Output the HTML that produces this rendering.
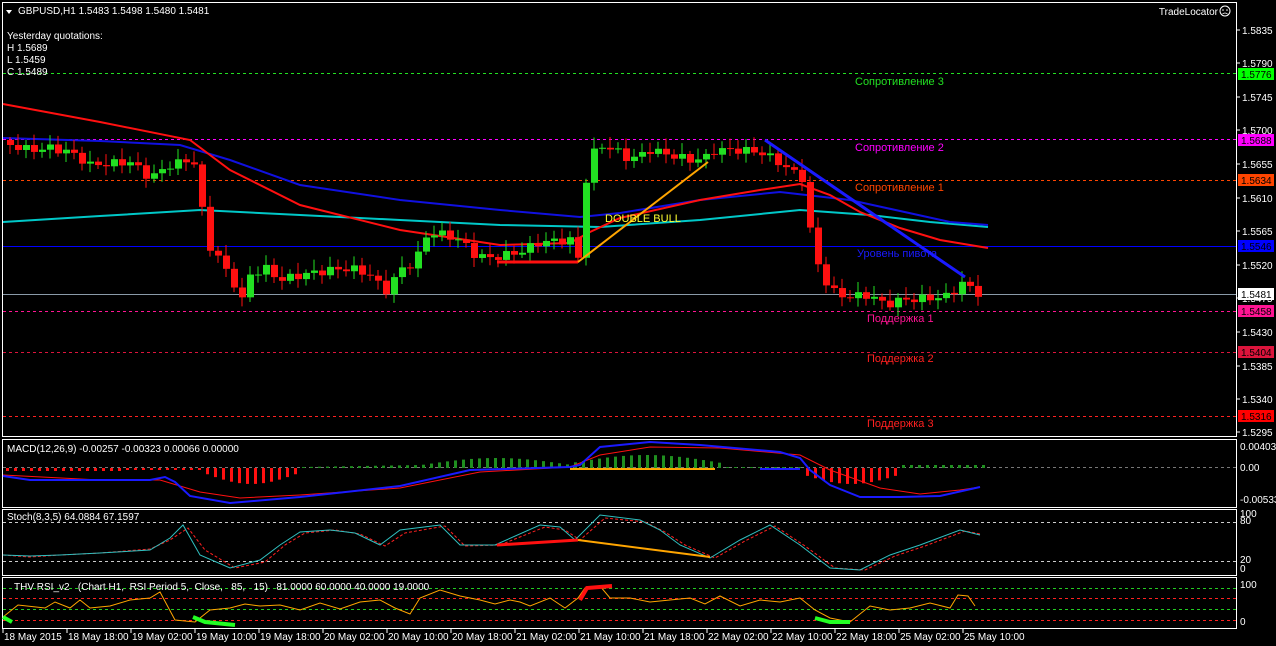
<!DOCTYPE html>
<html><head><meta charset="utf-8"><style>
html,body{margin:0;padding:0;background:#000;width:1276px;height:646px;overflow:hidden}
svg{display:block;font-family:"Liberation Sans","DejaVu Sans",sans-serif}
</style></head><body>
<svg id="s" width="1276" height="646" viewBox="0 0 1276 646" xmlns="http://www.w3.org/2000/svg">
<rect width="1276" height="646" fill="#000"/>
<g fill="none" stroke="#fff" stroke-width="1">
<rect x="2.5" y="2.5" width="1234" height="434"/>
<rect x="2.5" y="439.5" width="1234" height="68"/>
<rect x="2.5" y="509.5" width="1234" height="66"/>
<rect x="2.5" y="577.5" width="1234" height="51"/>
</g>
<g stroke-width="1" fill="none">
<line x1="3" y1="73.5" x2="1236" y2="73.5" stroke="#22e022" stroke-dasharray="3,3"/>
<line x1="3" y1="139.5" x2="1236" y2="139.5" stroke="#ff00ff" stroke-dasharray="3,3"/>
<line x1="3" y1="180.5" x2="1236" y2="180.5" stroke="#ff4500" stroke-dasharray="3,3"/>
<line x1="3" y1="246.5" x2="1236" y2="246.5" stroke="#0000ff"/>
<line x1="3" y1="294.5" x2="1236" y2="294.5" stroke="#8a9aa8"/>
<line x1="3" y1="311.5" x2="1236" y2="311.5" stroke="#ff1493" stroke-dasharray="3,3"/>
<line x1="3" y1="352.5" x2="1236" y2="352.5" stroke="#dc143c" stroke-dasharray="3,3"/>
<line x1="3" y1="416.5" x2="1236" y2="416.5" stroke="#ff2020" stroke-dasharray="3,3"/>
</g>
<g fill="none" stroke-width="2">
<polyline stroke="#00c8c8" points="3,222 100,216 200,210 300,215 400,220 500,225 600,227 700,220 780,212 800,210 870,215 930,222 988,227"/>
<polyline stroke="#1010e0" points="3,138 100,141 180,145 230,160 300,185 400,200 500,210 580,217 620,213 700,200 780,192 850,200 950,222 988,225"/>
<polyline stroke="#ff1010" points="3,104 100,122 190,140 230,170 300,205 400,230 500,245 570,243 590,232 620,218 700,200 760,190 800,184 830,195 860,212 900,228 940,240 988,248"/>
</g>
<g id="candles"></g>
<polyline points="497,262 578,262" stroke="#ff1010" stroke-width="3" fill="none"/>
<line x1="578" y1="262" x2="708" y2="162" stroke="#ffa500" stroke-width="2"/>
<line x1="765" y1="140" x2="965" y2="277" stroke="#1a1aff" stroke-width="3"/>
<text x="605" y="222" fill="#ffff30" font-size="11">DOUBLE  BULL</text>
<g font-size="11">
<text x="855" y="85" fill="#22e022">Сопротивление 3</text>
<text x="855" y="151" fill="#ff00ff">Сопротивление 2</text>
<text x="855" y="191" fill="#ff4500">Сопротивление 1</text>
<text x="857" y="257" fill="#1a1aff">Уровень пивота</text>
<text x="867" y="322" fill="#ff1493">Поддержка 1</text>
<text x="867" y="362" fill="#ff2020">Поддержка 2</text>
<text x="867" y="427" fill="#ff2020">Поддержка 3</text>
</g>
<polygon points="6,10 12,10 9,14" fill="#fff"/>
<g fill="#fff" font-size="10">
<text x="18" y="14">GBPUSD,H1  1.5483 1.5498 1.5480 1.5481</text>
<text x="7" y="39">Yesterday quotations:</text>
<text x="7" y="51">H 1.5689</text>
<text x="7" y="63">L 1.5459</text>
<text x="7" y="75">C 1.5489</text>
<text x="1218" y="15" text-anchor="end">TradeLocator</text>
</g>
<circle cx="1225" cy="11" r="5" fill="none" stroke="#fff"/>
<circle cx="1223" cy="10" r=".8" fill="#fff"/><circle cx="1227" cy="10" r=".8" fill="#fff"/>
<path d="M1222.5 14 Q1225 12 1227.5 14" stroke="#fff" fill="none" stroke-width=".8"/>
<g id="axis" fill="#fff" font-size="10"></g>
<line x1="3" y1="467.5" x2="1236" y2="467.5" stroke="#777" stroke-dasharray="3,3"/>
<g id="hist"></g>
<polyline fill="none" stroke="#ff1010" stroke-width="1" points="3,475 100,480 160,480 200,492 240,498 300,495 400,488 480,472 570,467 600,455 650,447 720,448 800,455 830,470 880,488 920,494 960,490 980,487"/>
<polyline fill="none" stroke="#1a1aff" stroke-width="2" points="3,476 30,480 150,480 165,477 175,482 190,496 230,503 300,497 400,486 470,470 570,467 580,465 600,447 650,442 700,445 780,452 800,458 810,470 830,485 860,497 900,497 940,496 980,487"/>
<line x1="570" y1="469" x2="715" y2="469" stroke="#ffa500" stroke-width="2"/>
<line x1="760" y1="469" x2="800" y2="469" stroke="#1a1aff" stroke-width="2"/>
<text x="7" y="452" fill="#fff" font-size="10">MACD(12,26,9) -0.00257 -0.00323 0.00066 0.00000</text>
<line x1="3" y1="522.5" x2="1236" y2="522.5" stroke="#ccc" stroke-dasharray="3,3"/>
<line x1="3" y1="561.5" x2="1236" y2="561.5" stroke="#ccc" stroke-dasharray="3,3"/>
<polyline fill="none" stroke="#ff2020" stroke-dasharray="3,2" points="3,555 30,557 60,555 100,553 150,549 170,540 188,528 205,550 235,568 265,562 285,545 305,533 335,530 360,534 385,546 405,533 445,526 465,546 500,545 545,527 565,530 580,540 605,518 645,522 665,532 685,545 715,558 745,541 775,526 805,546 835,568 865,570 895,556 925,546 965,531 980,534"/>
<polyline fill="none" stroke="#30c0c0" points="3,555 30,556 60,555 100,553 150,550 170,538 183,525 200,555 230,568 260,560 280,545 300,532 330,530 355,533 380,545 400,530 440,525 460,545 495,545 540,525 560,527 575,540 600,515 640,520 660,530 680,545 710,558 740,540 770,525 800,545 830,568 860,570 890,555 920,545 960,530 980,535"/>
<line x1="497" y1="545" x2="578" y2="540" stroke="#ff1010" stroke-width="3"/>
<line x1="578" y1="540" x2="710" y2="557" stroke="#ffa500" stroke-width="2"/>
<text x="7" y="520" fill="#fff" font-size="10">Stoch(8,3,5) 64.0884 67.1597</text>
<line x1="3" y1="588.5" x2="1236" y2="588.5" stroke="#22cc22" stroke-dasharray="3,3"/>
<line x1="3" y1="598.5" x2="1236" y2="598.5" stroke="#ff2020" stroke-dasharray="3,3"/>
<line x1="3" y1="609.5" x2="1236" y2="609.5" stroke="#22cc22" stroke-dasharray="3,3"/>
<line x1="3" y1="620.5" x2="1236" y2="620.5" stroke="#ff2020" stroke-dasharray="3,3"/>
<polyline fill="none" stroke="#ffa500" points="3,617 18,605 45,608 55,602 70,608 80,600 90,608 110,606 130,600 150,598 160,592 175,620 195,622 210,610 230,608 245,604 260,606 280,605 300,610 320,603 340,609 360,602 380,600 395,608 410,614 420,598 440,590 460,596 480,600 495,604 510,600 520,602 530,606 550,598 565,608 578,598 585,588 600,586 610,598 630,598 650,602 670,600 690,598 705,604 720,596 740,606 760,600 780,602 800,598 815,610 830,618 850,622 870,606 890,610 910,608 930,603 950,608 958,595 968,596 975,606"/>
<polyline fill="none" stroke="#22ff22" stroke-width="4" points="3,617 12,622"/>
<polyline fill="none" stroke="#22ff22" stroke-width="4" points="193,617 205,622 235,625"/>
<polyline fill="none" stroke="#22ff22" stroke-width="4" points="815,618 830,622 850,622"/>
<polyline fill="none" stroke="#ff1010" stroke-width="4" points="580,600 587,588 612,586"/>
<text x="14" y="590" fill="#fff" font-size="10" xml:space="preserve">THV RSI_v2   (Chart H1,  RSI Period 5,  Close,   85,   15)   81.0000 60.0000 40.0000 19.0000</text>
<g id="time" fill="#fff" font-size="10"></g>
</svg>
<script>
(function(){
var NS="http://www.w3.org/2000/svg";
function el(p,t,a,txt){var e=document.createElementNS(NS,t);for(var k in a)e.setAttribute(k,a[k]);if(txt)e.textContent=txt;p.appendChild(e);return e;}
var kp=[[10,145],[30,150],[50,148],[70,152],[90,165],[130,162],[150,178],[170,165],[190,160],[198,165],[205,245],[215,250],[225,270],[235,285],[242,300],[250,275],[265,268],[280,280],[300,275],[330,270],[350,268],[370,275],[385,292],[400,270],[415,262],[428,232],[445,235],[460,240],[475,255],[490,258],[520,252],[540,242],[570,240],[578,258],[588,160],[600,145],[615,150],[630,160],[650,150],[670,155],[690,160],[705,158],[715,150],[740,150],[760,152],[775,160],[790,170],[805,180],[812,250],[820,270],[830,290],[845,297],[870,295],[885,305],[900,300],[930,298],[950,296],[958,285],[965,282],[972,290],[980,294]];
function f(x){for(var i=0;i<kp.length-1;i++){if(x<=kp[i+1][0]){var a=kp[i],b=kp[i+1];return a[1]+(b[1]-a[1])*(x-a[0])/(b[0]-a[0]);}}return kp[kp.length-1][1];}
var g=document.getElementById('candles');var prev=140;
for(var i=0;i<122;i++){var x=10+8*i;var c=f(x)+Math.sin(i*2.3)*4;var o=prev;prev=c;
var col=c<o?'#22e022':'#ff1010';var tp=Math.min(o,c),bt=Math.max(o,c);
var hi=tp-3-Math.abs(Math.sin(i*1.7))*8,lo=bt+3+Math.abs(Math.cos(i*1.3))*6;
el(g,'line',{x1:x,y1:hi,x2:x,y2:lo,stroke:col,'stroke-width':1});
var h=Math.max(1,bt-tp);el(g,'rect',{x:x-3,y:tp,width:7,height:h,fill:col});}
var ax=document.getElementById('axis');
var pr=[["1.5835",30],["1.5790",63],["1.5745",97],["1.5700",130],["1.5655",164],["1.5610",198],["1.5565",231],["1.5520",265],["1.5475",298],["1.5430",332],["1.5385",366],["1.5340",399],["1.5295",432]];
pr.forEach(function(p){el(ax,'line',{x1:1237,y1:p[1],x2:1240,y2:p[1],stroke:'#fff'});el(ax,'text',{x:1242,y:p[1]+4},p[0]);});
var bx=[["1.5776",68,"#00ff00"],["1.5688",134,"#ff00ff"],["1.5634",174,"#ff4500"],["1.5546",240,"#0000ff"],["1.5481",288,"#ffffff"],["1.5458",305,"#ff1493"],["1.5404",346,"#dc143c"],["1.5316",410,"#ff0000"]];
bx.forEach(function(b){el(ax,'rect',{x:1238,y:b[1],width:36,height:12,fill:b[2]});el(ax,'text',{x:1241,y:b[1]+10,fill:'#000'},b[0]);});
[["0.00403",450],["0.00",471],["-0.00533",503],["100",517],["80",524],["20",563],["0",572],["100",588],["0",625]].forEach(function(p){el(ax,'text',{x:1240,y:p[1],fill:'#fff'},p[0]);});
var hg=document.getElementById('hist');
for(var x=6;x<=986;x+=8){var v=0;
if(x<120)v=-3;
else if(x<200)v=-2;
else if(x<300)v=-(4+Math.sin((x-200)/100*Math.PI)*12);
else if(x<420)v=1+(x-300)/60;
else if(x<570)v=3+Math.sin((x-420)/150*Math.PI)*7;
else if(x<720)v=5+Math.sin((x-570)/150*Math.PI)*8;
else if(x<800)v=1;
else if(x<900)v=-(6+Math.sin((x-800)/100*Math.PI)*10);
else v=3;
var col=v<0?'#ff1010':'#1f8f1f';var hh=Math.abs(v);
el(hg,'rect',{x:x,y:v<0?468:468-hh,width:3,height:hh,fill:col});}
var tg=document.getElementById('time');
var tl=["18 May 2015","18 May 18:00","19 May 02:00","19 May 10:00","19 May 18:00","20 May 02:00","20 May 10:00","20 May 18:00","21 May 02:00","21 May 10:00","21 May 18:00","22 May 02:00","22 May 10:00","22 May 18:00","25 May 02:00","25 May 10:00"];
tl.forEach(function(t,i){var x=3+64*i;el(tg,'line',{x1:x,y1:629,x2:x,y2:633,stroke:'#fff'});el(tg,'text',{x:x+1,y:640},t);});
})();
</script>
</body></html>
